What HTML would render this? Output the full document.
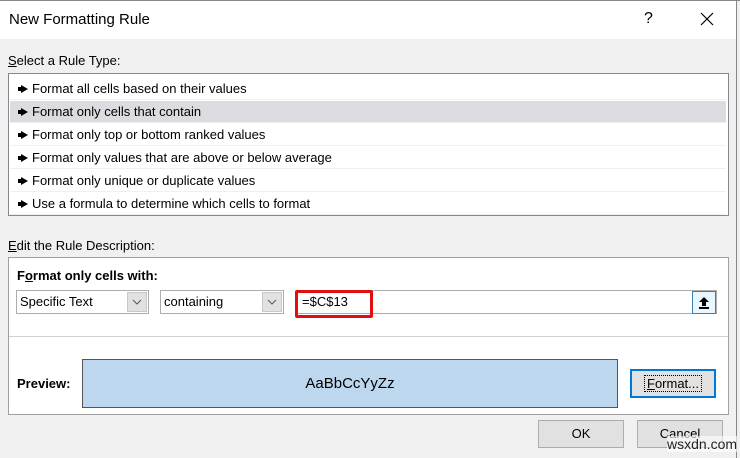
<!DOCTYPE html>
<html><head><style>
body{margin:0;width:740px;height:458px;background:#f0f0f0;font-family:"Liberation Sans",sans-serif;font-size:13px;color:#000;position:relative;overflow:hidden}
.a{position:absolute}
.row{position:absolute;left:10px;width:716px;height:22px;line-height:22px;padding-left:8px;box-sizing:border-box;border-bottom:1px solid #f0f0f0}
.row svg{vertical-align:0px;margin-right:4px}
.dd{position:absolute;background:#fff;border:1px solid #adadad;height:24px;box-sizing:border-box;line-height:22px;padding-left:3px}
.dd .b{position:absolute;right:1px;top:1px;width:20px;height:20px;background:#e1e1e1;border:1px solid #c8c8c8;box-sizing:border-box}
.btn{position:absolute;background:#e1e1e1;border:1px solid #adadad;box-sizing:border-box;text-align:center}
</style></head><body>
<div class="a" style="left:0;top:0;width:737px;height:39px;background:#fff"></div>
<div class="a" style="left:736px;top:0;width:1px;height:458px;background:#888"></div>
<div class="a" style="left:0;top:0;width:740px;height:1px;background:#888"></div>
<div class="a" style="left:9px;top:11px;font-size:15px">New Formatting Rule</div>
<div class="a" style="left:644px;top:10px;font-size:16px">?</div>
<svg class="a" style="left:700px;top:12px" width="14" height="14"><path d="M1 1L13 13M13 1L1 13" stroke="#000" stroke-width="1.2"/></svg>
<div class="a" style="left:8px;top:53px"><u>S</u>elect a Rule Type:</div>
<div class="a" style="left:8px;top:73px;width:721px;height:143px;background:#fff;border:1px solid #828790;box-sizing:border-box"></div>
<div class="row" style="top:78px"><svg width="10" height="8"><path d="M0 2H3V0L10 4L3 8V6H0Z"/></svg>Format all cells based on their values</div>
<div class="row" style="top:101px;background:#dcdce0"><svg width="10" height="8"><path d="M0 2H3V0L10 4L3 8V6H0Z"/></svg>Format only cells that contain</div>
<div class="row" style="top:124px"><svg width="10" height="8"><path d="M0 2H3V0L10 4L3 8V6H0Z"/></svg>Format only top or bottom ranked values</div>
<div class="row" style="top:147px"><svg width="10" height="8"><path d="M0 2H3V0L10 4L3 8V6H0Z"/></svg>Format only values that are above or below average</div>
<div class="row" style="top:170px"><svg width="10" height="8"><path d="M0 2H3V0L10 4L3 8V6H0Z"/></svg>Format only unique or duplicate values</div>
<div class="row" style="top:193px"><svg width="10" height="8"><path d="M0 2H3V0L10 4L3 8V6H0Z"/></svg>Use a formula to determine which cells to format</div>
<div class="a" style="left:8px;top:238px"><u>E</u>dit the Rule Description:</div>
<div class="a" style="left:8px;top:257px;width:721px;height:158px;background:#fff;border:1px solid #a0a0a0;box-sizing:border-box"></div>
<div class="a" style="left:17px;top:268px;font-weight:bold">F<u>o</u>rmat only cells with:</div>
<div class="dd" style="left:16px;top:290px;width:133px">Specific Text<div class="b"><svg width="18" height="18"><path d="M5 7L9 11L13 7" fill="none" stroke="#555"/></svg></div></div>
<div class="dd" style="left:160px;top:290px;width:124px">containing<div class="b"><svg width="18" height="18"><path d="M5 7L9 11L13 7" fill="none" stroke="#555"/></svg></div></div>
<div class="dd" style="left:296px;top:290px;width:421px;padding-left:5px">=$C$13</div>
<div class="a" style="left:295px;top:290px;width:78px;height:28px;border:3px solid #e01010;box-sizing:border-box;border-radius:2px"></div>
<div class="a" style="left:692px;top:291px;width:24px;height:23px;background:#eaf6fd;border:1px solid #3c7fb1;box-sizing:border-box"><svg width="22" height="21"><path d="M11 5L6 10H9V14H13V10H16Z" fill="#000"/><rect x="6" y="15" width="10" height="2" fill="#000"/></svg></div>
<div class="a" style="left:9px;top:336px;width:719px;height:1px;background:#d0d0d0"></div>
<div class="a" style="left:17px;top:376px;font-weight:bold">Preview:</div>
<div class="a" style="left:82px;top:359px;width:536px;height:49px;background:#bdd7ee;border:1px solid #555;box-sizing:border-box;text-align:center;line-height:47px;font-size:15px">AaBbCcYyZz</div>
<div class="btn" style="left:630px;top:369px;width:86px;height:29px;border:2px solid #0078d7;line-height:25px"><span style="outline:1px dotted #000;padding:0 2px"><u>F</u>ormat...</span></div>
<div class="btn" style="left:538px;top:420px;width:86px;height:28px;line-height:26px">OK</div>
<div class="btn" style="left:637px;top:420px;width:86px;height:28px;line-height:26px">Cancel</div>
<div class="a" style="left:667px;top:436px;font-size:14px;color:#222;background:rgba(255,255,255,.6)">wsxdn.com</div>
</body></html>
